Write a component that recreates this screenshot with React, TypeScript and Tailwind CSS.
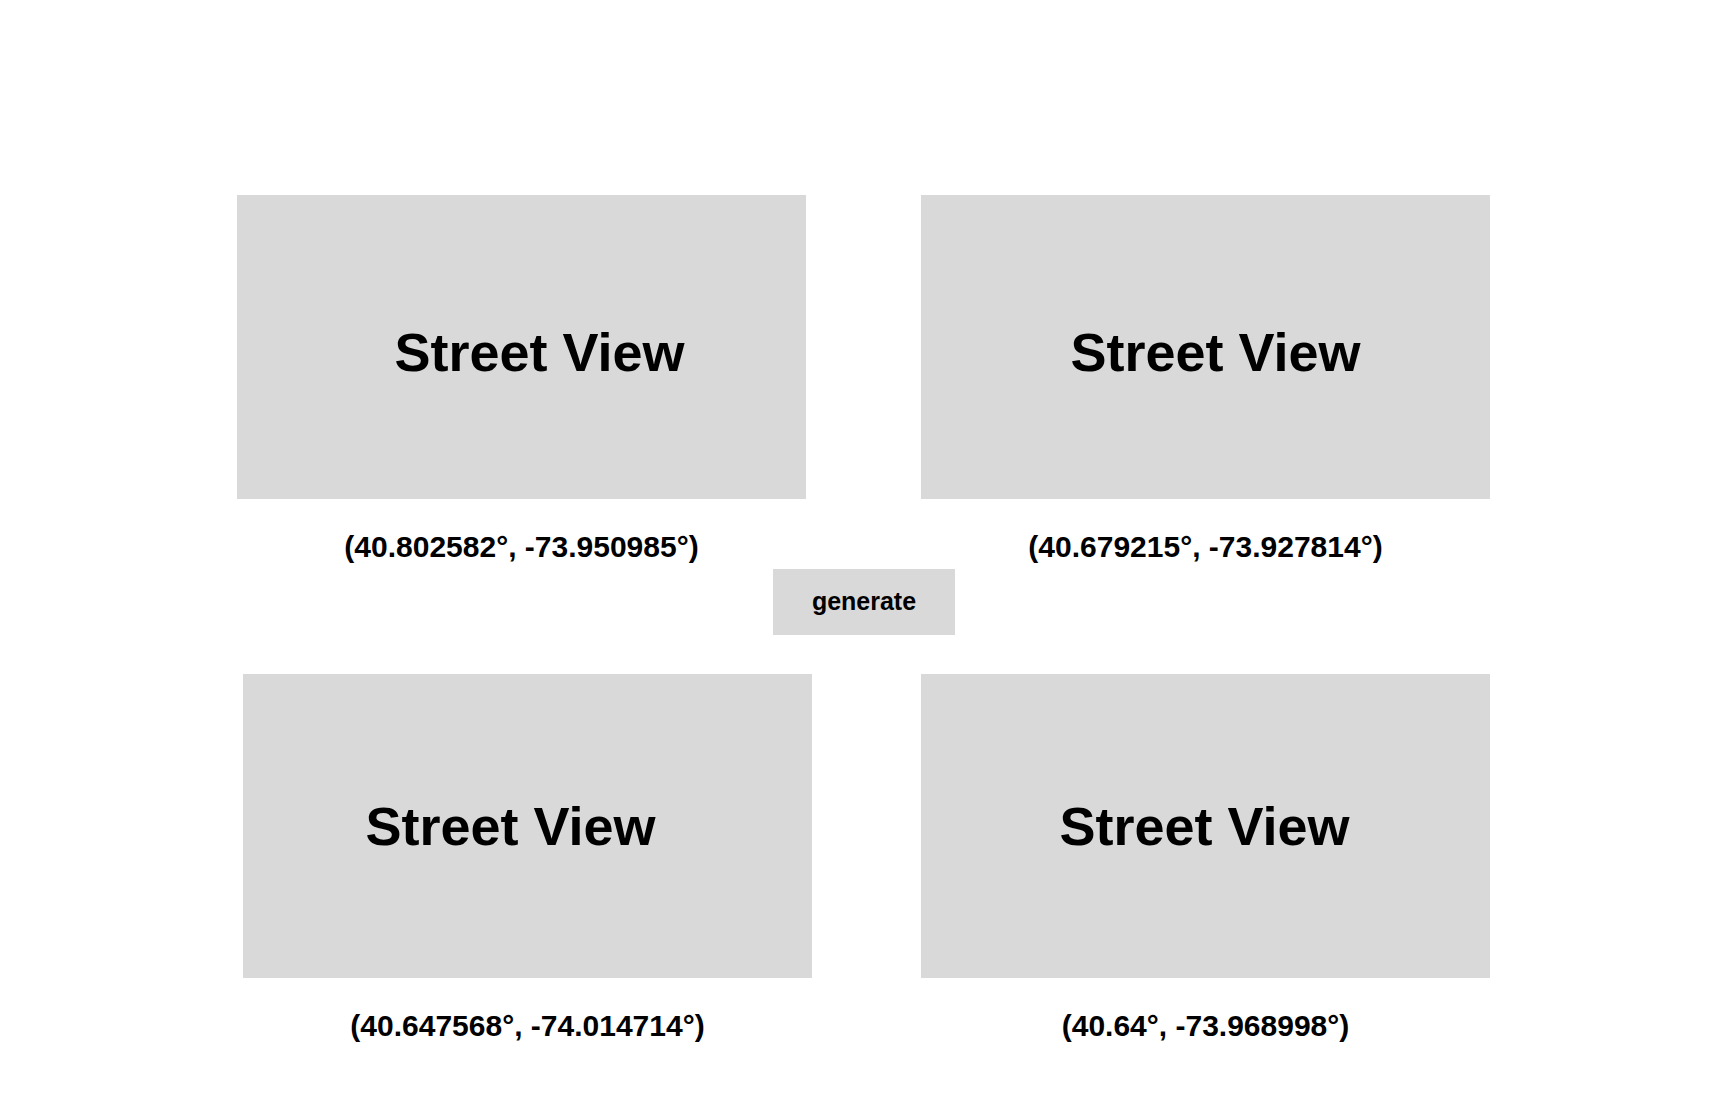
const font = { fontFamily: '"Liberation Sans", Arial, sans-serif' };

type Spot = { lat: number; lng: number; dx: string };

function Panel({ spot }: { spot: Spot }) {
  return (
    <div className="flex flex-col items-center">
      <div className="flex h-[304px] w-[569px] items-center justify-center bg-[#d9d9d9]">
        <span className={`text-[54px] leading-none font-bold text-black ${spot.dx}`}>Street View</span>
      </div>
      <p className="mt-[33px] text-[30px] leading-none font-bold text-black">
        ({spot.lat}°, {spot.lng}°)
      </p>
    </div>
  );
}

export default function App() {
  const top: Spot[] = [
    { lat: 40.802582, lng: -73.950985, dx: "ml-[36px] mt-[9px]" },
    { lat: 40.679215, lng: -73.927814, dx: "ml-[20px] mt-[9px]" },
  ];
  const bottom: Spot[] = [
    { lat: 40.647568, lng: -74.014714, dx: "mr-[34px]" },
    { lat: 40.64, lng: -73.968998, dx: "mr-[2px]" },
  ];

  return (
    <div className="min-h-screen w-full bg-white pt-[195px]" style={font}>
      <div className="flex gap-[115px] pl-[237px]">
        {top.map((s, i) => (
          <Panel key={i} spot={s} />
        ))}
      </div>
      <div className="mt-[7px] flex justify-center">
        <button className="h-[66px] w-[182px] bg-[#d9d9d9] text-[25px] font-bold text-black">generate</button>
      </div>
      <div className="mt-[39px] flex gap-[109px] pl-[243px]">
        {bottom.map((s, i) => (
          <Panel key={i} spot={s} />
        ))}
      </div>
    </div>
  );
}
